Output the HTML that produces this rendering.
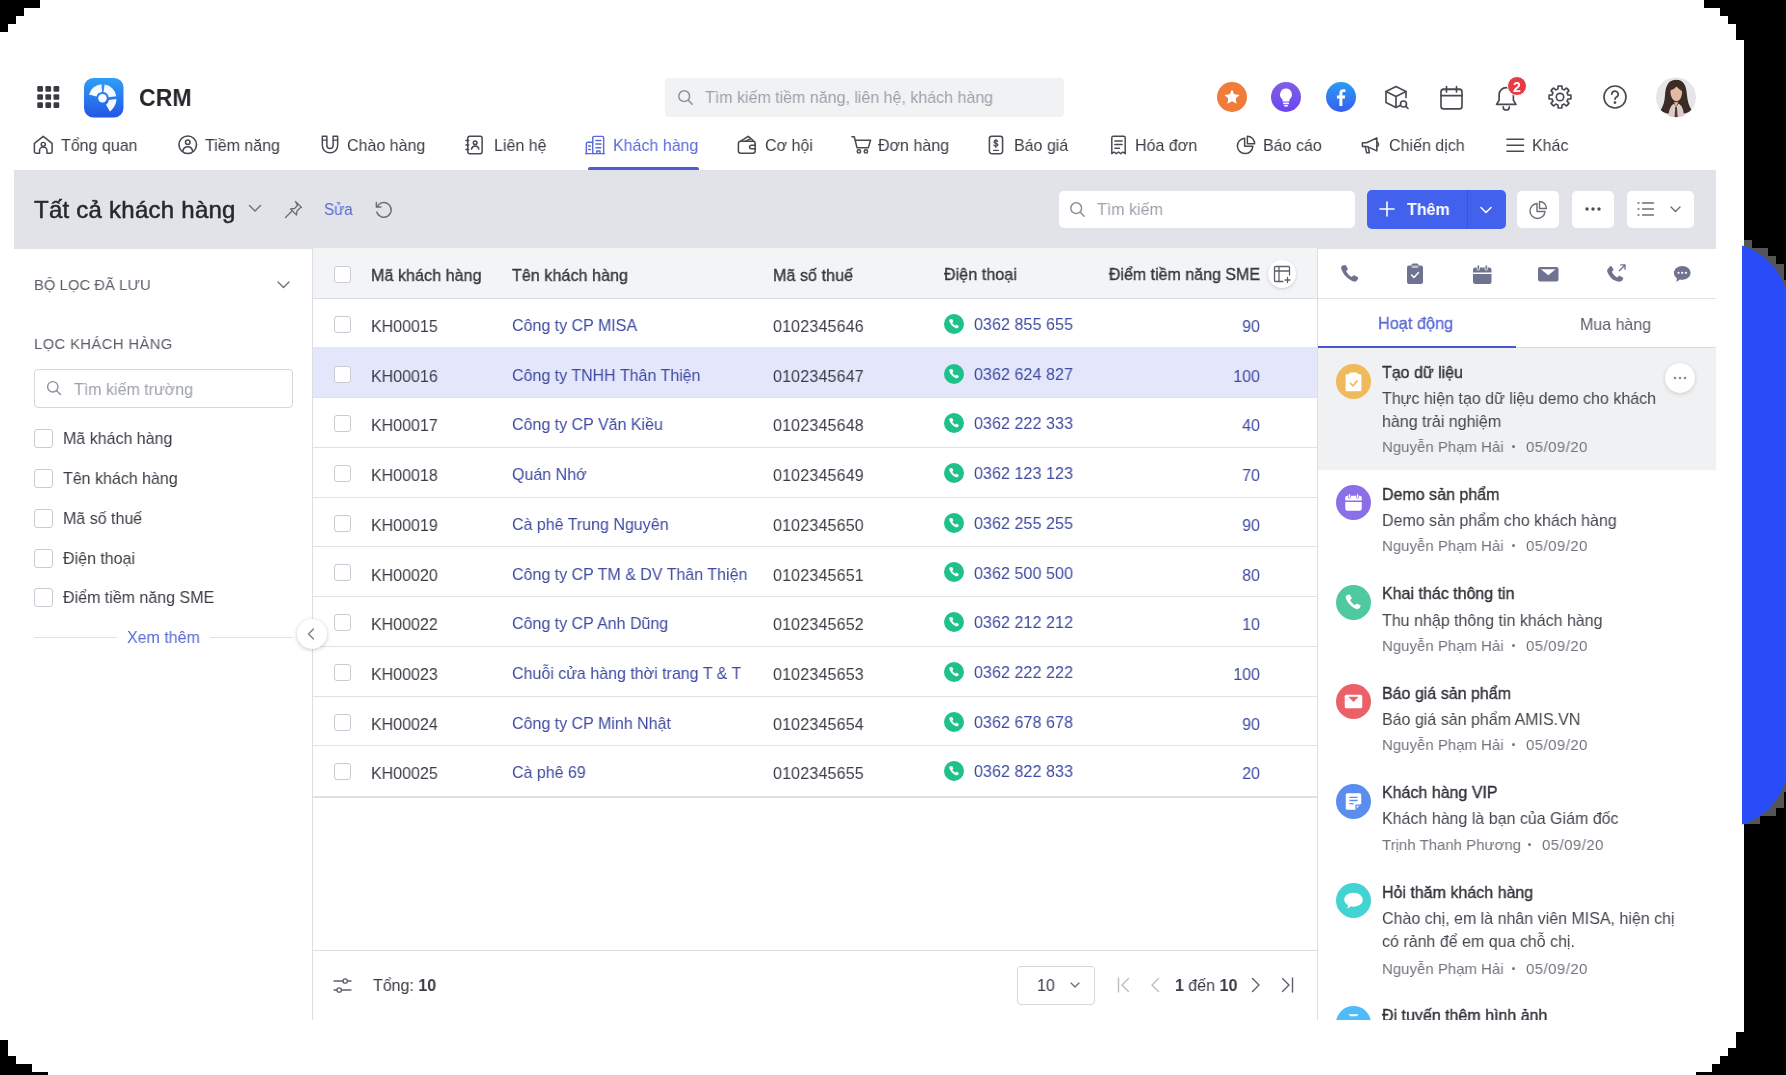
<!DOCTYPE html>
<html lang="vi">
<head>
<meta charset="utf-8">
<title>CRM</title>
<style>
*{box-sizing:border-box;margin:0;padding:0}
html,body{width:1786px;height:1075px;overflow:hidden;background:#000}
body{-webkit-font-smoothing:antialiased;font-family:"Liberation Sans",sans-serif;font-size:16px;color:#33363d;position:relative}
.abs{position:absolute}
.t{position:absolute;white-space:nowrap;line-height:20px;height:20px;margin-top:1px;font-size:16.600px;transform:scaleX(.964);transform-origin:0 50%;will-change:transform}
.r{transform-origin:100% 50%}
.md{-webkit-text-stroke:0.35px currentColor}
.bd{font-weight:700}
.blk{position:absolute;background:#000}
.gry{position:absolute;background:#555}
#card{position:absolute;left:0;top:0;width:1744px;height:1075px;background:#fff}
#bluewrap{position:absolute;left:1742px;top:236px;width:44px;height:600px;overflow:hidden}
#blue{position:absolute;left:-102px;top:7.3px;width:148.4px;height:584.0px;background:#2a4dfa;border-radius:64.0px}
svg{position:absolute;overflow:visible}
.ic{fill:none;stroke:#474a52;stroke-width:1.650;stroke-linecap:round;stroke-linejoin:round}
.nav{color:#3a3d45}
.ph{color:#9da1ab}
.lnk{color:#3d4aa0}
.cb{position:absolute;width:17px;height:17px;border:1.5px solid #c9ccd3;border-radius:3px;background:#fff}
.hl{position:absolute;height:1px;background:#dfe1e5}
.btn{position:absolute;background:#fff;border-radius:5px}
</style>
</head>
<body>
<div id="card"></div>
<!-- stair-step black corners -->
<div class="blk" style="left:0;top:0;width:40px;height:8px"></div>
<div class="blk" style="left:0;top:8px;width:24px;height:8px"></div>
<div class="blk" style="left:0;top:16px;width:16px;height:8px"></div>
<div class="blk" style="left:0;top:24px;width:8px;height:8px"></div>
<div class="blk" style="left:1704px;top:0;width:82px;height:8px"></div>
<div class="blk" style="left:1720px;top:8px;width:66px;height:8px"></div>
<div class="blk" style="left:1728px;top:16px;width:58px;height:8px"></div>
<div class="blk" style="left:1736px;top:24px;width:50px;height:16px"></div>
<div class="blk" style="left:0;top:1040px;width:8px;height:35px"></div>
<div class="blk" style="left:0;top:1056px;width:16px;height:19px"></div>
<div class="blk" style="left:0;top:1064px;width:32px;height:11px"></div>
<div class="blk" style="left:0;top:1072px;width:48px;height:3px"></div>
<div class="blk" style="left:1736px;top:1032px;width:50px;height:43px"></div>
<div class="blk" style="left:1728px;top:1048px;width:58px;height:27px"></div>
<div class="blk" style="left:1720px;top:1056px;width:66px;height:19px"></div>
<div class="blk" style="left:1712px;top:1064px;width:74px;height:11px"></div>
<div class="blk" style="left:1696px;top:1072px;width:90px;height:3px"></div>
<!-- gray alpha artefacts near blue curve -->
<div class="gry" style="left:1744px;top:240px;width:8px;height:8px"></div>
<div class="gry" style="left:1744px;top:248px;width:8px;height:8px"></div>
<div class="gry" style="left:1744px;top:816px;width:8px;height:8px"></div>
<div class="gry" style="left:1752px;top:248px;width:8px;height:8px"></div>
<div class="gry" style="left:1752px;top:816px;width:8px;height:8px"></div>
<div class="gry" style="left:1760px;top:248px;width:8px;height:8px"></div>
<div class="gry" style="left:1760px;top:256px;width:8px;height:8px"></div>
<div class="gry" style="left:1760px;top:808px;width:8px;height:8px"></div>
<div class="gry" style="left:1768px;top:256px;width:8px;height:8px"></div>
<div class="gry" style="left:1768px;top:264px;width:8px;height:8px"></div>
<div class="gry" style="left:1768px;top:800px;width:8px;height:8px"></div>
<div class="gry" style="left:1768px;top:808px;width:8px;height:8px"></div>
<div class="gry" style="left:1776px;top:264px;width:8px;height:8px"></div>
<div class="gry" style="left:1776px;top:272px;width:8px;height:8px"></div>
<div class="gry" style="left:1776px;top:280px;width:8px;height:8px"></div>
<div class="gry" style="left:1776px;top:784px;width:8px;height:8px"></div>
<div class="gry" style="left:1776px;top:792px;width:8px;height:8px"></div>
<div class="gry" style="left:1776px;top:800px;width:8px;height:8px"></div>
<div class="gry" style="left:1784px;top:280px;width:2px;height:8px"></div>
<div class="gry" style="left:1784px;top:288px;width:2px;height:8px"></div>
<div class="gry" style="left:1784px;top:776px;width:2px;height:8px"></div>
<div class="gry" style="left:1784px;top:784px;width:2px;height:8px"></div>
<div id="bluewrap"><div id="blue"></div></div>

<!--TOPBAR-->
<svg style="left:37.300px;top:86.200px" width="22.500" height="22" viewBox="0 0 23 23" fill="#393b42">
<rect x="0" y="0" width="6" height="6" rx="1.3"/><rect x="8.5" y="0" width="6" height="6" rx="1.3"/><rect x="17" y="0" width="6" height="6" rx="1.3"/>
<rect x="0" y="8.5" width="6" height="6" rx="1.3"/><rect x="8.5" y="8.5" width="6" height="6" rx="1.3"/><rect x="17" y="8.5" width="6" height="6" rx="1.3"/>
<rect x="0" y="17" width="6" height="6" rx="1.3"/><rect x="8.5" y="17" width="6" height="6" rx="1.3"/><rect x="17" y="17" width="6" height="6" rx="1.3"/>
</svg>
<svg style="left:83.500px;top:77.500px" width="39.500" height="39.500" viewBox="0 0 40 40">
<defs><linearGradient id="lg" x1="0" y1="0" x2="0" y2="1"><stop offset="0" stop-color="#2f9ff6"/><stop offset="1" stop-color="#2456e6"/></linearGradient></defs>
<rect width="40" height="40" rx="9.500" fill="url(#lg)"/>
<path d="M5.05 16.59A14.2 14.2 0 0 1 17.71 6.33L18.25 14.12A6.4 6.4 0 0 0 12.55 18.74Z" fill="#f4faff"/>
<path d="M20.92 6.47A14.2 14.2 0 0 1 32.76 18.52L25.04 19.61A6.4 6.4 0 0 0 19.70 14.18Z" fill="#f4faff"/>
<path d="M25.2 22.3 L32.8 21.2 C33 25.500 30.500 30.500 26.200 33.800 L22.300 27 C23.800 26 24.800 24.300 25.200 22.300Z" fill="#f4faff"/>
<circle cx="18.7" cy="20.5" r="4.300" fill="#f4faff"/>
</svg>
<div class="t bd" style="left:138.500px;top:83px;font-size:24.500px;line-height:28px;height:28px;transform:scaleX(.940);color:#24262c">CRM</div>
<div class="abs" style="left:665px;top:78px;width:399px;height:39px;background:#f1f2f4;border-radius:4px"></div>
<svg style="left:677px;top:89px" width="17" height="17" viewBox="0 0 17 17"><circle cx="7.2" cy="7.2" r="5.4" fill="none" stroke="#8c909a" stroke-width="1.5"/><path d="M11.3 11.3 L15.2 15.2" stroke="#8c909a" stroke-width="1.5" stroke-linecap="round"/></svg>
<div class="t ph" style="left:705px;top:87px">Tìm kiếm tiềm năng, liên hệ, khách hàng</div>
<!-- round icons -->
<svg style="left:1217px;top:82px" width="30" height="30" viewBox="0 0 30 30"><circle cx="15" cy="15" r="15" fill="#ef7c3b"/><path d="M15 7.5l2.3 4.8 5.2.7-3.8 3.6.9 5.2-4.6-2.5-4.6 2.5.9-5.2-3.8-3.6 5.2-.7z" fill="#fff"/></svg>
<svg style="left:1271px;top:82px" width="30" height="30" viewBox="0 0 30 30"><defs><linearGradient id="pg" x1="0" y1="0" x2="0" y2="1"><stop offset="0" stop-color="#8160e6"/><stop offset="1" stop-color="#6b45f0"/></linearGradient></defs><circle cx="15" cy="15" r="15" fill="url(#pg)"/><path d="M15 6.5a6 6 0 0 0-3.4 10.9v2.1h6.8v-2.1A6 6 0 0 0 15 6.5z" fill="#fff"/><rect x="12" y="20.5" width="6" height="1.8" rx=".9" fill="#fff"/><rect x="13" y="23" width="4" height="1.6" rx=".8" fill="#fff"/></svg>
<svg style="left:1326px;top:82px" width="30" height="30" viewBox="0 0 30 30"><defs><linearGradient id="fg" x1="0" y1="0" x2="0" y2="1"><stop offset="0" stop-color="#2a9df4"/><stop offset="1" stop-color="#3a5cf0"/></linearGradient></defs><circle cx="15" cy="15" r="15" fill="url(#fg)"/><path d="M16.4 24v-7.6h2.5l.4-3h-2.9v-1.9c0-.9.3-1.4 1.5-1.4h1.5V7.400c-.3 0-1.200-.1-2.300-.1-2.200 0-3.700 1.300-3.700 3.800v2.300h-2.500v3h2.500V24z" fill="#fff"/></svg>
<!-- cube -->
<svg class="ic" style="left:1384px;top:85px" width="26" height="26" viewBox="0 0 26 26"><path d="M12 1.500 2 6.500v11l10 5 4-2"/><path d="M12 1.500l10 5v6"/><path d="M2 6.500l10 5 10-5M12 11.500v11"/><circle cx="19.500" cy="19" r="3"/><path d="M21.700 21.200l2.300 2.300"/></svg>
<!-- calendar -->
<svg class="ic" style="left:1440px;top:84.500px" width="24" height="25.500" preserveAspectRatio="none" viewBox="0 0 24 24"><rect x="1" y="4" width="21" height="18.500" rx="2.500"/><path d="M1 10h21M6.500 1.500v5M16.500 1.500v5"/></svg>
<!-- bell -->
<svg class="ic" style="left:1494px;top:84.500px" width="24.500" height="25.500" viewBox="0 0 24 25"><path d="M12 2.500a7 7 0 0 0-7 7v5.500l-2.500 4h19l-2.500-4V9.500a7 7 0 0 0-7-7z"/><path d="M9 21.500a3 3 0 0 0 6 0"/></svg>
<div class="abs" style="left:1507px;top:76px;width:20px;height:20px;border-radius:50%;background:#e83a45;border:1.5px solid #fff"></div>
<div class="t bd" style="left:1507px;top:76px;width:20px;text-align:center;color:#fff;font-size:14px;transform:none">2</div>
<!-- gear -->
<svg class="ic" style="left:1548px;top:85px" width="24" height="24" viewBox="0 0 24 24"><circle cx="12" cy="12" r="3.700"/><path d="M10.11 1.16A11 11 0 0 1 13.89 1.16L14.04 4.06A8.2 8.2 0 0 1 16.17 4.94L18.33 3.00A11 11 0 0 1 21.00 5.67L19.06 7.83A8.2 8.2 0 0 1 19.94 9.96L22.84 10.11A11 11 0 0 1 22.84 13.89L19.94 14.04A8.2 8.2 0 0 1 19.06 16.17L21.00 18.33A11 11 0 0 1 18.33 21.00L16.17 19.06A8.2 8.2 0 0 1 14.04 19.94L13.89 22.84A11 11 0 0 1 10.11 22.84L9.96 19.94A8.2 8.2 0 0 1 7.83 19.06L5.67 21.00A11 11 0 0 1 3.00 18.33L4.94 16.17A8.2 8.2 0 0 1 4.06 14.04L1.16 13.89A11 11 0 0 1 1.16 10.11L4.06 9.96A8.2 8.2 0 0 1 4.94 7.83L3.00 5.67A11 11 0 0 1 5.67 3.00L7.83 4.94A8.2 8.2 0 0 1 9.96 4.06Z"/></svg>
<!-- help -->
<svg class="ic" style="left:1603px;top:85px" width="24" height="24" viewBox="0 0 24 24"><circle cx="12" cy="12" r="11"/><path d="M8.800 9.300a3.200 3.200 0 1 1 4.700 2.800c-.9.500-1.500 1.100-1.500 2.200"/><circle cx="12" cy="17.600" r=".6" fill="#40434b"/></svg>
<!-- avatar -->
<svg style="left:1655.500px;top:77px" width="40" height="40.500" viewBox="0 0 40 40"><defs><clipPath id="av"><circle cx="20" cy="20" r="20"/></clipPath></defs><g clip-path="url(#av)"><rect width="40" height="40" fill="#e6e5e7"/><path d="M20 2.500C11 2.500 9.500 11 9 18c-.5 7-2 11-4.500 15 3 2.500 7 3.500 9.500 3.500h12c3.500 0 7-1.500 9.500-4C33 29 31.500 24 31 18 30.500 10 28.500 2.500 20 2.500z" fill="#3a2b27"/><path d="M14.500 15c0-4.500 2.500-7 6-7s5.500 3 5.500 7c0 5-2.500 9-5.500 9s-6-4-6-9z" fill="#e3b9a4"/><path d="M14 13c1.500-4 4-5.500 7-5.500 2.500 0 4.500 2 5.500 6.500-2.500-1.500-4.500-3-6-4.800-1.500 1.800-4 3.300-6.500 3.800z" fill="#3a2b27"/><path d="M12.500 40c0-8 3-12.500 5.500-13.500l2 3 2.500-3c3 1 5.500 5.500 5.500 13.500z" fill="#dccbc9"/><path d="M19.300 29.500h1.600l.8 10.500h-3.200z" fill="#4a3a38"/><path d="M17.800 24.500l2.200 5 2.500-5c-1.500.8-3.200.8-4.700 0z" fill="#e3b9a4"/></g></svg>
<!--NAV-->
<!-- Tong quan: house -->
<svg class="ic" style="left:33px;top:135px" width="20.500" height="19.500" preserveAspectRatio="none" viewBox="0 0 22 22"><path d="M1.500 9.500 11 1.500l9.500 8v9a2 2 0 0 1-2 2h-3.500v-3a4 4 0 0 0-8 0v3H3.500a2 2 0 0 1-2-2z"/><circle cx="11" cy="10.500" r="2.200"/></svg>
<div class="t nav" style="left:61px;top:135px">Tổng quan</div>
<!-- Tiem nang: user circle -->
<svg class="ic" style="left:177.500px;top:135.300px" width="19.500" height="19.500" viewBox="0 0 20 20"><circle cx="10" cy="10" r="9"/><circle cx="10" cy="7.500" r="2.300"/><path d="M5 16.500c.5-3 2.500-4.500 5-4.500s4.500 1.500 5 4.500"/></svg>
<div class="t nav" style="left:205px;top:135px">Tiềm năng</div>
<!-- Chao hang: magnet -->
<svg class="ic" style="left:321px;top:135px" width="18" height="19.500" preserveAspectRatio="none" viewBox="0 0 20 23"><path d="M1.500 1.500h5v11a3.500 3.500 0 0 0 7 0v-11h5v11a8.500 8.500 0 0 1-17 0z"/><path d="M1.500 6h5M13.500 6h5"/></svg>
<div class="t nav" style="left:347px;top:135px">Chào hàng</div>
<!-- Lien he: contact book -->
<svg class="ic" style="left:465px;top:134.500px" width="18.500" height="20" preserveAspectRatio="none" viewBox="0 0 20 22"><rect x="3" y="1.500" width="15.500" height="19" rx="2"/><path d="M1 6h3M1 11h3M1 16h3"/><circle cx="11" cy="8.500" r="2"/><path d="M7 15.500c.5-2.500 2-3.500 4-3.500s3.500 1 4 3.500"/></svg>
<div class="t nav" style="left:494px;top:135px">Liên hệ</div>
<!-- Khach hang: building (active) -->
<svg style="left:585px;top:134.500px;fill:none;stroke:#5a6ad6;stroke-width:1.600;stroke-linecap:round;stroke-linejoin:round" width="20" height="20" viewBox="0 0 22 22"><path d="M8.500 20.500V3a1.500 1.500 0 0 1 1.500-1.500h9a1.500 1.500 0 0 1 1.500 1.500v17.500"/><path d="M1.500 20.500V9.500A1.500 1.500 0 0 1 3 8h5.500"/><path d="M.800 20.500h20.400M12 6h5.500M12 10h5.500M12 14h5.500M4 12h2M4 16h2M13 20.500v-3h3.500v3"/></svg>
<div class="t" style="left:613px;top:135px;color:#5a6ad6">Khách hàng</div>
<div class="abs" style="left:588px;top:167px;width:111px;height:3px;background:#4a5ed6;border-radius:2px 2px 0 0"></div>
<!-- Co hoi: wallet -->
<svg class="ic" style="left:737px;top:135px" width="20.500" height="19.500" preserveAspectRatio="none" viewBox="0 0 22 22"><rect x="1.500" y="7" width="18" height="13.500" rx="2.500"/><path d="M4 7 12 1.500l3 2.500M9 7l6-3 3 3M19.500 11.500h-4a2 2 0 0 0 0 4h4"/></svg>
<div class="t nav" style="left:765px;top:135px">Cơ hội</div>
<!-- Don hang: cart -->
<svg class="ic" style="left:850.500px;top:135px" width="20.500" height="19.500" preserveAspectRatio="none" viewBox="0 0 22 22"><path d="M1 2h2.500l3 12.500h12l2.500-8.500H5"/><circle cx="8.500" cy="18.500" r="1.800"/><circle cx="16" cy="18.500" r="1.800"/></svg>
<div class="t nav" style="left:878px;top:135px">Đơn hàng</div>
<!-- Bao gia: phone-ish doc with $ -->
<svg class="ic" style="left:988px;top:134.500px" width="16" height="20" preserveAspectRatio="none" viewBox="0 0 17 22"><rect x="1.500" y="1.500" width="14" height="19" rx="2.500"/><path d="M10.300 7.200c-.4-.8-1.100-1.200-2-1.200-1.200 0-2 .7-2 1.600 0 2.100 4.200 1 4.200 3.200 0 1-.9 1.600-2.100 1.600-1 0-1.800-.4-2.200-1.300M8.400 4.800v9M6 17h5" stroke-width="1.300"/></svg>
<div class="t nav" style="left:1014px;top:135px">Báo giá</div>
<!-- Hoa don: receipt -->
<svg class="ic" style="left:1109.500px;top:134.500px" width="17" height="20" preserveAspectRatio="none" viewBox="0 0 19 22"><path d="M2 20.500V3a1.500 1.500 0 0 1 1.500-1.500h12A1.500 1.500 0 0 1 17 3v17.500l-2.500-1.800-2.500 1.800-2.500-1.800L7 20.500l-2.500-1.800z"/><path d="M5.500 6.500h8M5.500 10.500h8M5.500 14.500h5"/></svg>
<div class="t nav" style="left:1135px;top:135px">Hóa đơn</div>
<!-- Bao cao: pie -->
<svg class="ic" style="left:1235.500px;top:134.500px" width="20" height="20" viewBox="0 0 22 22"><path d="M9.500 3.500a8.500 8.500 0 1 0 9 9h-9z"/><path d="M12.500 1.500a8 8 0 0 1 8 8h-8z"/></svg>
<div class="t nav" style="left:1263px;top:135px">Báo cáo</div>
<!-- Chien dich: megaphone -->
<svg class="ic" style="left:1361px;top:135.500px" width="20.500" height="19" preserveAspectRatio="none" viewBox="0 0 22 21"><path d="M1.500 7.500h4.500L17 2v14.500L6 11.500H1.500z"/><path d="M17 6.500a3 3 0 0 1 0 5.500M4.500 11.500l1.500 7h3l-1.200-6.200"/></svg>
<div class="t nav" style="left:1389px;top:135px">Chiến dịch</div>
<!-- Khac -->
<svg class="ic" style="left:1505.500px;top:138px" width="18.500" height="14.500" preserveAspectRatio="none" viewBox="0 0 20 16"><path d="M1 1.500h18M1 8h18M1 14.500h18"/></svg>
<div class="t nav" style="left:1532px;top:135px">Khác</div>
<!--TOOLBAR-->
<div class="abs" style="left:14px;top:169.500px;width:1702px;height:79.500px;background:#e1e3e8"></div>
<div class="t" style="left:34px;top:192.500px;font-size:24px;letter-spacing:.250px;line-height:32px;height:32px;transform:none;color:#26282e;-webkit-text-stroke:0.500px #26282e">Tất cả khách hàng</div>
<svg class="ic" style="left:248px;top:204px;stroke:#6a6d76;stroke-width:1.400" width="14" height="9" viewBox="0 0 14 9"><path d="M1.500 1.500 7 7l5.500-5.500"/></svg>
<svg class="ic" style="left:284px;top:200px;stroke:#6a6d76;stroke-width:1.300" width="19" height="19" viewBox="0 0 19 19"><path d="M11.500 1.500l6 6-1.500.5-3 3-.5 4-3-3-3-3 4-.5 3-3z"/><path d="M7.500 11.500 1.500 17.500"/></svg>
<div class="t" style="left:324px;top:199px;font-size:15.800px;color:#5a6ad6">Sửa</div>
<svg class="ic" style="left:373.500px;top:200.500px;stroke:#6a6d76;stroke-width:1.500" width="18.500" height="17.500" viewBox="0 0 20 19"><path d="M3.500 6a8 8 0 1 1-.5 6"/><path d="M2.500 1.500v5h5"/></svg>
<div class="btn" style="left:1059px;top:190.500px;width:296px;height:37.500px"></div>
<svg style="left:1069px;top:201px" width="17" height="17" viewBox="0 0 17 17"><circle cx="7.200" cy="7.200" r="5.400" fill="none" stroke="#8c909a" stroke-width="1.500"/><path d="M11.300 11.300 15.200 15.200" stroke="#8c909a" stroke-width="1.500" stroke-linecap="round"/></svg>
<div class="t ph" style="left:1097px;top:199px">Tìm kiếm</div>
<div class="btn" style="left:1366.500px;top:189.500px;width:139.500px;height:39.500px;background:#4262ee"></div>
<div class="abs" style="left:1467px;top:189.500px;width:1px;height:39.500px;background:#3a56d8"></div>
<svg style="left:1379px;top:201px;fill:none;stroke:#fff;stroke-width:1.600;stroke-linecap:round" width="16" height="16" viewBox="0 0 16 16"><path d="M8 1v14M1 8h14"/></svg>
<div class="t bd" style="left:1407px;top:199px;color:#fff">Thêm</div>
<svg style="left:1480px;top:206px;fill:none;stroke:#fff;stroke-width:1.500;stroke-linecap:round;stroke-linejoin:round" width="12" height="8" viewBox="0 0 12 8"><path d="M1 1.500 6 6.500l5-5"/></svg>
<div class="btn" style="left:1517px;top:190.500px;width:42px;height:37.500px"></div>
<svg class="ic" style="left:1529px;top:200px;stroke:#6c6f78;stroke-width:1.400" width="19" height="19" viewBox="0 0 19 19"><path d="M8 3.500a7.500 7.500 0 1 0 8 8H8z"/><path d="M10.500 1.500a7 7 0 0 1 7 7h-7z"/></svg>
<div class="btn" style="left:1572px;top:190.500px;width:42px;height:37.500px"></div>
<svg style="left:1585px;top:207px" width="16" height="4" viewBox="0 0 16 4" fill="#4a4d56"><circle cx="2" cy="2" r="1.700"/><circle cx="8" cy="2" r="1.700"/><circle cx="14" cy="2" r="1.700"/></svg>
<div class="btn" style="left:1627px;top:190.500px;width:67px;height:37.500px"></div>
<svg class="ic" style="left:1637px;top:201px;stroke:#6c6f78;stroke-width:1.400" width="18" height="16" viewBox="0 0 18 16"><path d="M5.500 2h11M5.500 8h11M5.500 14h11M1 2h1M1 8h1M1 14h1"/></svg>
<svg class="ic" style="left:1670px;top:206px;stroke:#6a6d76;stroke-width:1.400" width="11" height="7" viewBox="0 0 11 7"><path d="M1 1l4.500 4.500L10 1"/></svg>
<!--SIDEBAR-->
<div class="t" style="left:33.500px;top:274px;font-size:15.300px;letter-spacing:.080px;color:#5b5e67">BỘ LỌC ĐÃ LƯU</div>
<svg class="ic" style="left:277px;top:281px;stroke:#6a6d76;stroke-width:1.300" width="13" height="8" viewBox="0 0 13 8"><path d="M1 1l5.500 5.500L12 1"/></svg>
<div class="t" style="left:33.500px;top:332.500px;font-size:15.300px;letter-spacing:.440px;color:#5b5e67">LỌC KHÁCH HÀNG</div>
<div class="abs" style="left:34px;top:369px;width:259px;height:39px;border:1px solid #d3d6dc;border-radius:4px;background:#fff"></div>
<svg style="left:46px;top:380px" width="16" height="16" viewBox="0 0 16 16"><circle cx="6.800" cy="6.800" r="5.200" fill="none" stroke="#8c909a" stroke-width="1.400"/><path d="M10.700 10.700 14.500 14.500" stroke="#8c909a" stroke-width="1.400" stroke-linecap="round"/></svg>
<div class="t ph" style="left:74px;top:379px">Tìm kiếm trường</div>
<div class="cb" style="left:34px;top:429px;width:19px;height:19px"></div><div class="t" style="left:63px;top:428px;color:#3a3d45">Mã khách hàng</div>
<div class="cb" style="left:34px;top:469px;width:19px;height:19px"></div><div class="t" style="left:63px;top:468px;color:#3a3d45">Tên khách hàng</div>
<div class="cb" style="left:34px;top:509px;width:19px;height:19px"></div><div class="t" style="left:63px;top:508px;color:#3a3d45">Mã số thuế</div>
<div class="cb" style="left:34px;top:549px;width:19px;height:19px"></div><div class="t" style="left:63px;top:548px;color:#3a3d45">Điện thoại</div>
<div class="cb" style="left:34px;top:588px;width:19px;height:19px"></div><div class="t" style="left:63px;top:587px;color:#3a3d45">Điểm tiềm năng SME</div>
<div class="hl" style="left:34px;top:637px;width:83px"></div>
<div class="hl" style="left:210px;top:637px;width:83px"></div>
<div class="t" style="left:127px;top:627px;color:#5a6ad6">Xem thêm</div>
<div class="abs" style="left:312px;top:248px;width:1px;height:772px;background:#dcdee3"></div>
<!--TABLE-->
<div class="abs" style="left:313px;top:248px;width:1004px;height:50px;background:#f3f4f6"></div>
<div class="hl" style="left:313px;top:298px;width:1004px;background:#dcdee3"></div>
<div class="cb" style="left:334px;top:266px"></div>
<div class="t md" style="left:371px;top:265px;color:#33363d;letter-spacing:.100px">Mã khách hàng</div>
<div class="t md" style="left:512px;top:265px;color:#33363d;letter-spacing:.100px">Tên khách hàng</div>
<div class="t md" style="left:773px;top:265px;color:#33363d;letter-spacing:.100px">Mã số thuế</div>
<div class="t md" style="left:944px;top:264px;color:#33363d;letter-spacing:.100px">Điện thoại</div>
<div class="t md r" style="left:1060px;top:264px;width:200px;text-align:right;color:#33363d">Điểm tiềm năng SME</div>
<div class="abs" style="left:1268px;top:260px;width:28px;height:28px;border-radius:50%;background:#fff;box-shadow:0 1px 3px rgba(0,0,0,.18)"></div>
<svg class="ic" style="left:1273px;top:265px;stroke:#5d606a;stroke-width:1.300" width="19" height="19" viewBox="0 0 19 19"><path d="M10 16.500H2.500a1 1 0 0 1-1-1v-13a1 1 0 0 1 1-1h13a1 1 0 0 1 1 1V10M1.500 6h15M6 1.500v15M14.500 12.500v5M12 15h5"/></svg>
<div class="hl" style="left:313px;top:348px;width:1004px"></div><div class="cb" style="left:334px;top:316px"></div><div class="t" style="left:371px;top:316px;color:#3a3d45">KH00015</div><div class="t lnk" style="left:512px;top:315px">Công ty CP MISA</div><div class="t" style="left:773px;top:316px;color:#3a3d45;letter-spacing:.200px">0102345646</div><svg style="left:944px;top:314px" width="20" height="20" viewBox="0 0 20 20"><circle cx="10" cy="10" r="10" fill="#1fc18a"/><path d="M7.300 5.200c.4-.3.900-.2 1.100.2l.8 1.600c.2.400.1.800-.2 1l-.7.600c.6 1.300 1.600 2.400 2.900 3.100l.7-.7c.3-.3.700-.3 1-.1l1.500.9c.4.200.5.700.2 1.100l-.6.800c-.5.600-1.300.8-2 .5-3.300-1.200-5.800-3.800-6.700-7.100-.2-.7.100-1.400.7-1.800z" fill="#fff"/></svg><div class="t lnk" style="left:974px;top:314px;letter-spacing:.100px">0362 855 655</div><div class="t lnk r" style="left:1160px;top:316px;width:100px;text-align:right">90</div>
<div class="abs" style="left:313px;top:347px;width:1004px;height:50px;background:#e4e6fb"></div><div class="hl" style="left:313px;top:397px;width:1004px"></div><div class="cb" style="left:334px;top:366px"></div><div class="t" style="left:371px;top:366px;color:#3a3d45">KH00016</div><div class="t lnk" style="left:512px;top:365px">Công ty TNHH Thân Thiện</div><div class="t" style="left:773px;top:366px;color:#3a3d45;letter-spacing:.200px">0102345647</div><svg style="left:944px;top:364px" width="20" height="20" viewBox="0 0 20 20"><circle cx="10" cy="10" r="10" fill="#1fc18a"/><path d="M7.300 5.200c.4-.3.900-.2 1.100.2l.8 1.600c.2.400.1.800-.2 1l-.7.600c.6 1.300 1.600 2.400 2.900 3.100l.7-.7c.3-.3.700-.3 1-.1l1.500.9c.4.200.5.700.2 1.100l-.6.800c-.5.600-1.300.8-2 .5-3.300-1.200-5.800-3.800-6.700-7.100-.2-.7.100-1.400.7-1.800z" fill="#fff"/></svg><div class="t lnk" style="left:974px;top:364px;letter-spacing:.100px">0362 624 827</div><div class="t lnk r" style="left:1160px;top:366px;width:100px;text-align:right">100</div>
<div class="hl" style="left:313px;top:447px;width:1004px"></div><div class="cb" style="left:334px;top:415px"></div><div class="t" style="left:371px;top:415px;color:#3a3d45">KH00017</div><div class="t lnk" style="left:512px;top:414px">Công ty CP Văn Kiều</div><div class="t" style="left:773px;top:415px;color:#3a3d45;letter-spacing:.200px">0102345648</div><svg style="left:944px;top:413px" width="20" height="20" viewBox="0 0 20 20"><circle cx="10" cy="10" r="10" fill="#1fc18a"/><path d="M7.300 5.200c.4-.3.900-.2 1.100.2l.8 1.600c.2.400.1.800-.2 1l-.7.600c.6 1.300 1.600 2.400 2.900 3.100l.7-.7c.3-.3.700-.3 1-.1l1.500.9c.4.200.5.700.2 1.100l-.6.800c-.5.600-1.300.8-2 .5-3.300-1.200-5.800-3.800-6.700-7.100-.2-.7.100-1.400.7-1.800z" fill="#fff"/></svg><div class="t lnk" style="left:974px;top:413px;letter-spacing:.100px">0362 222 333</div><div class="t lnk r" style="left:1160px;top:415px;width:100px;text-align:right">40</div>
<div class="hl" style="left:313px;top:497px;width:1004px"></div><div class="cb" style="left:334px;top:465px"></div><div class="t" style="left:371px;top:465px;color:#3a3d45">KH00018</div><div class="t lnk" style="left:512px;top:464px">Quán Nhớ</div><div class="t" style="left:773px;top:465px;color:#3a3d45;letter-spacing:.200px">0102345649</div><svg style="left:944px;top:463px" width="20" height="20" viewBox="0 0 20 20"><circle cx="10" cy="10" r="10" fill="#1fc18a"/><path d="M7.300 5.200c.4-.3.900-.2 1.100.2l.8 1.600c.2.400.1.800-.2 1l-.7.600c.6 1.300 1.600 2.400 2.900 3.100l.7-.7c.3-.3.700-.3 1-.1l1.500.9c.4.200.5.700.2 1.100l-.6.800c-.5.600-1.300.8-2 .5-3.300-1.200-5.800-3.800-6.700-7.100-.2-.7.100-1.400.7-1.800z" fill="#fff"/></svg><div class="t lnk" style="left:974px;top:463px;letter-spacing:.100px">0362 123 123</div><div class="t lnk r" style="left:1160px;top:465px;width:100px;text-align:right">70</div>
<div class="hl" style="left:313px;top:546px;width:1004px"></div><div class="cb" style="left:334px;top:515px"></div><div class="t" style="left:371px;top:515px;color:#3a3d45">KH00019</div><div class="t lnk" style="left:512px;top:514px">Cà phê Trung Nguyên</div><div class="t" style="left:773px;top:515px;color:#3a3d45;letter-spacing:.200px">0102345650</div><svg style="left:944px;top:513px" width="20" height="20" viewBox="0 0 20 20"><circle cx="10" cy="10" r="10" fill="#1fc18a"/><path d="M7.300 5.200c.4-.3.900-.2 1.100.2l.8 1.600c.2.400.1.800-.2 1l-.7.600c.6 1.300 1.600 2.400 2.900 3.100l.7-.7c.3-.3.700-.3 1-.1l1.500.9c.4.200.5.700.2 1.100l-.6.800c-.5.600-1.300.8-2 .5-3.300-1.200-5.800-3.800-6.700-7.100-.2-.7.100-1.400.7-1.800z" fill="#fff"/></svg><div class="t lnk" style="left:974px;top:513px;letter-spacing:.100px">0362 255 255</div><div class="t lnk r" style="left:1160px;top:515px;width:100px;text-align:right">90</div>
<div class="hl" style="left:313px;top:596px;width:1004px"></div><div class="cb" style="left:334px;top:564px"></div><div class="t" style="left:371px;top:565px;color:#3a3d45">KH00020</div><div class="t lnk" style="left:512px;top:564px">Công ty CP TM &amp; DV Thân Thiện</div><div class="t" style="left:773px;top:565px;color:#3a3d45;letter-spacing:.200px">0102345651</div><svg style="left:944px;top:562px" width="20" height="20" viewBox="0 0 20 20"><circle cx="10" cy="10" r="10" fill="#1fc18a"/><path d="M7.300 5.200c.4-.3.900-.2 1.100.2l.8 1.600c.2.400.1.800-.2 1l-.7.600c.6 1.300 1.600 2.400 2.900 3.100l.7-.7c.3-.3.700-.3 1-.1l1.500.9c.4.200.5.700.2 1.100l-.6.800c-.5.600-1.300.8-2 .5-3.300-1.200-5.800-3.800-6.700-7.100-.2-.7.100-1.400.7-1.800z" fill="#fff"/></svg><div class="t lnk" style="left:974px;top:563px;letter-spacing:.100px">0362 500 500</div><div class="t lnk r" style="left:1160px;top:565px;width:100px;text-align:right">80</div>
<div class="hl" style="left:313px;top:646px;width:1004px"></div><div class="cb" style="left:334px;top:614px"></div><div class="t" style="left:371px;top:614px;color:#3a3d45">KH00022</div><div class="t lnk" style="left:512px;top:613px">Công ty CP Anh Dũng</div><div class="t" style="left:773px;top:614px;color:#3a3d45;letter-spacing:.200px">0102345652</div><svg style="left:944px;top:612px" width="20" height="20" viewBox="0 0 20 20"><circle cx="10" cy="10" r="10" fill="#1fc18a"/><path d="M7.300 5.200c.4-.3.900-.2 1.100.2l.8 1.600c.2.400.1.800-.2 1l-.7.600c.6 1.300 1.600 2.400 2.900 3.100l.7-.7c.3-.3.700-.3 1-.1l1.500.9c.4.200.5.700.2 1.100l-.6.800c-.5.600-1.300.8-2 .5-3.300-1.200-5.800-3.800-6.700-7.100-.2-.7.100-1.400.7-1.800z" fill="#fff"/></svg><div class="t lnk" style="left:974px;top:612px;letter-spacing:.100px">0362 212 212</div><div class="t lnk r" style="left:1160px;top:614px;width:100px;text-align:right">10</div>
<div class="hl" style="left:313px;top:696px;width:1004px"></div><div class="cb" style="left:334px;top:664px"></div><div class="t" style="left:371px;top:664px;color:#3a3d45">KH00023</div><div class="t lnk" style="left:512px;top:663px">Chuỗi cửa hàng thời trang T &amp; T</div><div class="t" style="left:773px;top:664px;color:#3a3d45;letter-spacing:.200px">0102345653</div><svg style="left:944px;top:662px" width="20" height="20" viewBox="0 0 20 20"><circle cx="10" cy="10" r="10" fill="#1fc18a"/><path d="M7.300 5.200c.4-.3.900-.2 1.100.2l.8 1.600c.2.400.1.800-.2 1l-.7.600c.6 1.300 1.600 2.400 2.900 3.100l.7-.7c.3-.3.700-.3 1-.1l1.500.9c.4.200.5.700.2 1.100l-.6.800c-.5.600-1.300.8-2 .5-3.300-1.200-5.800-3.800-6.700-7.100-.2-.7.100-1.400.7-1.800z" fill="#fff"/></svg><div class="t lnk" style="left:974px;top:662px;letter-spacing:.100px">0362 222 222</div><div class="t lnk r" style="left:1160px;top:664px;width:100px;text-align:right">100</div>
<div class="hl" style="left:313px;top:745px;width:1004px"></div><div class="cb" style="left:334px;top:714px"></div><div class="t" style="left:371px;top:714px;color:#3a3d45">KH00024</div><div class="t lnk" style="left:512px;top:713px">Công ty CP Minh Nhật</div><div class="t" style="left:773px;top:714px;color:#3a3d45;letter-spacing:.200px">0102345654</div><svg style="left:944px;top:712px" width="20" height="20" viewBox="0 0 20 20"><circle cx="10" cy="10" r="10" fill="#1fc18a"/><path d="M7.300 5.200c.4-.3.900-.2 1.100.2l.8 1.600c.2.400.1.800-.2 1l-.7.600c.6 1.300 1.600 2.400 2.900 3.100l.7-.7c.3-.3.700-.3 1-.1l1.500.9c.4.200.5.700.2 1.100l-.6.800c-.5.600-1.300.8-2 .5-3.300-1.200-5.800-3.800-6.700-7.100-.2-.7.100-1.400.7-1.800z" fill="#fff"/></svg><div class="t lnk" style="left:974px;top:712px;letter-spacing:.100px">0362 678 678</div><div class="t lnk r" style="left:1160px;top:714px;width:100px;text-align:right">90</div>
<div class="hl" style="left:313px;top:796px;width:1004px;height:1.500px"></div><div class="cb" style="left:334px;top:763px"></div><div class="t" style="left:371px;top:763px;color:#3a3d45">KH00025</div><div class="t lnk" style="left:512px;top:762px">Cà phê 69</div><div class="t" style="left:773px;top:763px;color:#3a3d45;letter-spacing:.200px">0102345655</div><svg style="left:944px;top:761px" width="20" height="20" viewBox="0 0 20 20"><circle cx="10" cy="10" r="10" fill="#1fc18a"/><path d="M7.300 5.200c.4-.3.900-.2 1.100.2l.8 1.600c.2.400.1.800-.2 1l-.7.600c.6 1.300 1.600 2.400 2.900 3.100l.7-.7c.3-.3.700-.3 1-.1l1.500.9c.4.200.5.700.2 1.100l-.6.800c-.5.600-1.300.8-2 .5-3.300-1.200-5.800-3.800-6.700-7.100-.2-.7.100-1.400.7-1.800z" fill="#fff"/></svg><div class="t lnk" style="left:974px;top:761px;letter-spacing:.100px">0362 822 833</div><div class="t lnk r" style="left:1160px;top:763px;width:100px;text-align:right">20</div>
<div class="hl" style="left:313px;top:950px;width:1004px;background:#dcdee3"></div>
<svg class="ic" style="left:333px;top:977px;stroke:#5d606a;stroke-width:1.300" width="19" height="17" viewBox="0 0 19 17"><path d="M1 4h9M14.500 4H18M1 13h3M8.500 13H18"/><circle cx="12.200" cy="4" r="2.200"/><circle cx="6.200" cy="13" r="2.200"/></svg>
<div class="t" style="left:373px;top:975px;color:#3a3d45">Tổng: <span class="bd">10</span></div>
<div class="abs" style="left:1017px;top:966px;width:78px;height:39px;border:1px solid #d3d6dc;border-radius:4px;background:#fff"></div>
<div class="t" style="left:1037px;top:975px;color:#3a3d45">10</div>
<svg class="ic" style="left:1070px;top:982px;stroke:#6a6d76;stroke-width:1.300" width="10" height="7" viewBox="0 0 10 7"><path d="M1 1l4 4 4-4"/></svg>
<svg class="ic" style="left:1117px;top:977px;stroke:#b9bcc4;stroke-width:1.400" width="13" height="16" viewBox="0 0 13 16"><path d="M1.500 1v14M11.500 1.500 5 8l6.500 6.500"/></svg>
<svg class="ic" style="left:1150px;top:977px;stroke:#b9bcc4;stroke-width:1.400" width="10" height="16" viewBox="0 0 10 16"><path d="M8.500 1.500 2 8l6.500 6.500"/></svg>
<div class="t" style="left:1175px;top:975px;color:#3a3d45"><span class="bd">1</span> đến <span class="bd">10</span></div>
<svg class="ic" style="left:1251px;top:977px;stroke:#5d606a;stroke-width:1.400" width="10" height="16" viewBox="0 0 10 16"><path d="M1.500 1.500 8 8l-6.500 6.500"/></svg>
<svg class="ic" style="left:1281px;top:977px;stroke:#5d606a;stroke-width:1.400" width="13" height="16" viewBox="0 0 13 16"><path d="M11.500 1v14M1.500 1.500 8 8l-6.500 6.500"/></svg>
<!-- collapse btn -->
<div class="abs" style="left:297px;top:619px;width:30px;height:30px;border-radius:50%;background:#fff;box-shadow:0 1px 4px rgba(0,0,0,.22)"></div>
<svg class="ic" style="left:307px;top:628px;stroke:#7a7d86;stroke-width:1.300" width="8" height="12" viewBox="0 0 8 12"><path d="M6.500 1 1.500 6l5 5"/></svg>
<!--PANEL-->
<div class="abs" style="left:1317px;top:248px;width:1px;height:772px;background:#dcdee3"></div>
<div class="hl" style="left:1318px;top:298px;width:398px"></div>
<!-- quick action icons -->
<svg style="left:1340px;top:264px" width="20" height="20" viewBox="0 0 20 20" fill="#70738f"><path d="M4.200 1.300c.6-.4 1.400-.3 1.800.3l1.700 2.800c.3.600.2 1.300-.3 1.700l-1.300 1c1.200 2.600 3.200 4.700 5.800 6l1.100-1.300c.4-.5 1.100-.6 1.700-.300l2.800 1.600c.6.400.8 1.200.4 1.800l-1 1.500c-.8 1.100-2.200 1.500-3.500 1-5.700-2.200-10.100-6.600-12.100-12.400-.4-1.200 0-2.600 1.100-3.400z"/></svg>
<svg style="left:1407px;top:263px" width="16" height="21" viewBox="0 0 16 21" fill="#70738f"><path d="M2 2.500h2.500V2A1.500 1.500 0 0 1 6 .500h4A1.500 1.500 0 0 1 11.500 2v.500H14a2 2 0 0 1 2 2V19a2 2 0 0 1-2 2H2a2 2 0 0 1-2-2V4.500a2 2 0 0 1 2-2z"/><path d="M4.500 12l2.500 2.500 4.500-5" fill="none" stroke="#fff" stroke-width="1.500" stroke-linecap="round" stroke-linejoin="round"/><rect x="4.500" y="2.500" width="7" height="2.500" rx="1" fill="#fff" opacity=".550"/></svg>
<svg style="left:1472.500px;top:265px" width="18.500" height="19" preserveAspectRatio="none" viewBox="0 0 20 20" fill="#70738f"><path d="M2.500 2.500h15A2.500 2.500 0 0 1 20 5v3H0V5a2.500 2.500 0 0 1 2.500-2.500z"/><path d="M0 9.500h20V17.500a2.500 2.500 0 0 1-2.500 2.500h-15A2.500 2.500 0 0 1 0 17.500z"/><rect x="4.500" y="0" width="2.500" height="5.500" rx="1.200" stroke="#fff" stroke-width=".800"/><rect x="13" y="0" width="2.500" height="5.500" rx="1.200" stroke="#fff" stroke-width=".800"/></svg>
<svg style="left:1537.500px;top:267px" width="20.500" height="14.500" preserveAspectRatio="none" viewBox="0 0 21 16" fill="#70738f"><rect width="21" height="16" rx="2"/><path d="M3 2.500 10.500 9 18 2.500Z" fill="#fff"/></svg>
<svg style="left:1605.500px;top:264px" width="20" height="20" viewBox="0 0 21 21" fill="#70738f"><path d="M4.200 2.300c.6-.4 1.400-.3 1.800.3l1.700 2.800c.3.600.2 1.300-.3 1.700l-1.300 1c1.200 2.600 3.200 4.700 5.800 6l1.100-1.300c.4-.5 1.100-.6 1.700-.300l2.800 1.600c.6.400.8 1.200.4 1.800l-1 1.500c-.8 1.100-2.200 1.500-3.500 1C7.700 18.200 3.300 13.800 1.300 8c-.4-1.200 0-2.600 1.100-3.400z"/><path d="M14 7l5.500-5.500M15.500 1h4.500v4.500" fill="none" stroke="#70738f" stroke-width="1.400" stroke-linecap="round" stroke-linejoin="round"/></svg>
<svg style="left:1672.500px;top:264.500px" width="18.500" height="18.500" viewBox="0 0 20 20" fill="#70738f"><path d="M10 1c5 0 9 3.300 9 7.500S15 16 10 16c-.9 0-1.800-.1-2.600-.3L3.500 18.500l.8-3.900C2.300 13.200 1 11 1 8.500 1 4.300 5 1 10 1z"/><circle cx="6" cy="8.500" r="1.200" fill="#fff"/><circle cx="10" cy="8.500" r="1.200" fill="#fff"/><circle cx="14" cy="8.500" r="1.200" fill="#fff"/></svg>
<!-- tabs -->
<div class="t md" style="left:1378px;top:313px;font-size:16.91px;color:#5a6ad6">Hoạt động</div>
<div class="t" style="left:1580px;top:314px;color:#5b5e67">Mua hàng</div>
<div class="hl" style="left:1318px;top:347px;width:398px;background:#d9dbe0"></div>
<div class="abs" style="left:1318px;top:345.500px;width:198px;height:3px;background:#4659cf"></div>
<!-- list -->
<div class="abs" style="left:1318px;top:348px;width:398px;height:122px;background:#f0f1f3"></div>
<div class="abs" style="left:1665px;top:363px;width:30px;height:30px;border-radius:50%;background:#fff;box-shadow:0 1px 4px rgba(0,0,0,.160)"></div>
<svg style="left:1673px;top:376px" width="14" height="4" viewBox="0 0 14 4" fill="#8a8d96"><circle cx="2" cy="2" r="1.300"/><circle cx="7" cy="2" r="1.300"/><circle cx="12" cy="2" r="1.300"/></svg>
<svg style="left:1336px;margin-top:-.500px;top:364px" width="35" height="35" viewBox="-17 -17 34 34"><circle r="17" fill="#f0b95a"/><g transform="scale(1.180)"><path d="M-5.500-6h2v-.500a1 1 0 0 1 1-1h5a1 1 0 0 1 1 1v.500h2a1 1 0 0 1 1 1V7a1 1 0 0 1-1 1h-11a1 1 0 0 1-1-1V-5a1 1 0 0 1 1-1z" fill="#fff"/><path d="M-2.500 1.500l2 2 3.500-4" fill="none" stroke="#f0b95a" stroke-width="1.300" stroke-linecap="round"/></g></svg><div class="t md" style="left:1382px;top:362px;color:#2e3037">Tạo dữ liệu</div><div class="t" style="left:1382px;top:388px;color:#44474f">Thực hiện tạo dữ liệu demo cho khách</div><div class="t" style="left:1382px;top:411px;color:#44474f">hàng trải nghiệm</div><div class="t" style="left:1382px;top:436px;font-size:15.56px;color:#72757e">Nguyễn Phạm Hải</div><div class="abs" style="left:1512px;top:445px;width:3px;height:3px;border-radius:50%;background:#72757e"></div><div class="t" style="left:1526px;top:436px;font-size:15.56px;color:#72757e;letter-spacing:.450px">05/09/20</div>
<svg style="left:1336px;margin-top:-.500px;top:485px" width="35" height="35" viewBox="-17 -17 34 34"><circle r="17" fill="#8a6fe8"/><path d="M-8-4.500a2 2 0 0 1 2-2h12a2 2 0 0 1 2 2V-2H-8z" fill="#fff"/><path d="M-8-.500H8V6a2 2 0 0 1-2 2H-6a2 2 0 0 1-2-2z" fill="#fff"/><rect x="-5" y="-8.500" width="2" height="4.500" rx="1" fill="#fff" stroke="#8a6fe8" stroke-width=".700"/><rect x="3" y="-8.500" width="2" height="4.500" rx="1" fill="#fff" stroke="#8a6fe8" stroke-width=".700"/></svg><div class="t md" style="left:1382px;top:484px;color:#2e3037">Demo sản phẩm</div><div class="t" style="left:1382px;top:510px;color:#44474f">Demo sản phẩm cho khách hàng</div><div class="t" style="left:1382px;top:535px;font-size:15.56px;color:#72757e">Nguyễn Phạm Hải</div><div class="abs" style="left:1512px;top:544px;width:3px;height:3px;border-radius:50%;background:#72757e"></div><div class="t" style="left:1526px;top:535px;font-size:15.56px;color:#72757e;letter-spacing:.450px">05/09/20</div>
<svg style="left:1336px;margin-top:-.500px;top:585px" width="35" height="35" viewBox="-17 -17 34 34"><circle r="17" fill="#4fc9a0"/><path d="M-4.800-7.500c.5-.4 1.200-.3 1.500.3l1.400 2.400c.3.500.2 1.100-.3 1.400l-1.100.9c1 2.200 2.700 4 4.900 5.100l.9-1.100c.4-.4 1-.5 1.500-.200l2.400 1.400c.5.300.7 1 .3 1.500l-.8 1.200c-.7 1-1.900 1.300-3 .9-4.800-1.900-8.600-5.600-10.300-10.500-.4-1.100 0-2.200.9-2.900z" fill="#fff"/></svg><div class="t md" style="left:1382px;top:583px;color:#2e3037">Khai thác thông tin</div><div class="t" style="left:1382px;top:610px;color:#44474f">Thu nhập thông tin khách hàng</div><div class="t" style="left:1382px;top:635px;font-size:15.56px;color:#72757e">Nguyễn Phạm Hải</div><div class="abs" style="left:1512px;top:644px;width:3px;height:3px;border-radius:50%;background:#72757e"></div><div class="t" style="left:1526px;top:635px;font-size:15.56px;color:#72757e;letter-spacing:.450px">05/09/20</div>
<svg style="left:1336px;margin-top:-.500px;top:684px" width="35" height="35" viewBox="-17 -17 34 34"><circle r="17" fill="#ec6168"/><rect x="-8.500" y="-6.500" width="17" height="13" rx="1.500" fill="#fff"/><path d="M-5-4.500h10L0 .500z" fill="#ec6168"/></svg><div class="t md" style="left:1382px;top:683px;color:#2e3037">Báo giá sản phẩm</div><div class="t" style="left:1382px;top:709px;color:#44474f">Báo giá sản phẩm AMIS.VN</div><div class="t" style="left:1382px;top:734px;font-size:15.56px;color:#72757e">Nguyễn Phạm Hải</div><div class="abs" style="left:1512px;top:743px;width:3px;height:3px;border-radius:50%;background:#72757e"></div><div class="t" style="left:1526px;top:734px;font-size:15.56px;color:#72757e;letter-spacing:.450px">05/09/20</div>
<svg style="left:1336px;margin-top:-.500px;top:784px" width="35" height="35" viewBox="-17 -17 34 34"><circle r="17" fill="#5b8def"/><path d="M-6-8h12a1.500 1.500 0 0 1 1.500 1.500V2L2 8h-8a1.500 1.500 0 0 1-1.500-1.500v-13A1.500 1.500 0 0 1-6-8z" fill="#fff"/><path d="M-4-4h8M-4-1h8M-4 2h4M2.500 7.500V3.500h4.500" fill="none" stroke="#5b8def" stroke-width="1.300"/></svg><div class="t md" style="left:1382px;top:782px;color:#2e3037">Khách hàng VIP</div><div class="t" style="left:1382px;top:808px;color:#44474f">Khách hàng là bạn của Giám đốc</div><div class="t" style="left:1382px;top:834px;font-size:15.56px;color:#72757e">Trịnh Thanh Phương</div><div class="abs" style="left:1528px;top:843px;width:3px;height:3px;border-radius:50%;background:#72757e"></div><div class="t" style="left:1542px;top:834px;font-size:15.56px;color:#72757e;letter-spacing:.450px">05/09/20</div>
<svg style="left:1336px;margin-top:-.500px;top:883px" width="35" height="35" viewBox="-17 -17 34 34"><circle r="17" fill="#43d3d3"/><path d="M0-7.500c5 0 9 3 9 6.800S5 6 0 6c-.9 0-1.700-.1-2.500-.3L-6 8l.7-3.400C-7.500 3.300-9 1.400-9-.700-9-4.500-5-7.500 0-7.500z" fill="#fff"/></svg><div class="t md" style="left:1382px;top:882px;color:#2e3037">Hỏi thăm khách hàng</div><div class="t" style="left:1382px;top:908px;color:#44474f">Chào chị, em là nhân viên MISA, hiện chị</div><div class="t" style="left:1382px;top:931px;color:#44474f">có rảnh để em qua chỗ chị.</div><div class="t" style="left:1382px;top:958px;font-size:15.56px;color:#72757e">Nguyễn Phạm Hải</div><div class="abs" style="left:1512px;top:967px;width:3px;height:3px;border-radius:50%;background:#72757e"></div><div class="t" style="left:1526px;top:958px;font-size:15.56px;color:#72757e;letter-spacing:.450px">05/09/20</div>
<div class="abs" style="left:1318px;top:1000px;width:398px;height:20px;overflow:hidden">
<svg style="left:18px;top:6px" width="35" height="35" viewBox="-17 -17 34 34"><circle r="17" fill="#4fbcf7"/><path d="M-5-9l2 2h6l2-2" fill="#fff"/></svg>
<div class="t md" style="left:64px;top:5px;color:#2e3037">Đi tuyến thêm hình ảnh</div>
</div>
</body>
</html>
